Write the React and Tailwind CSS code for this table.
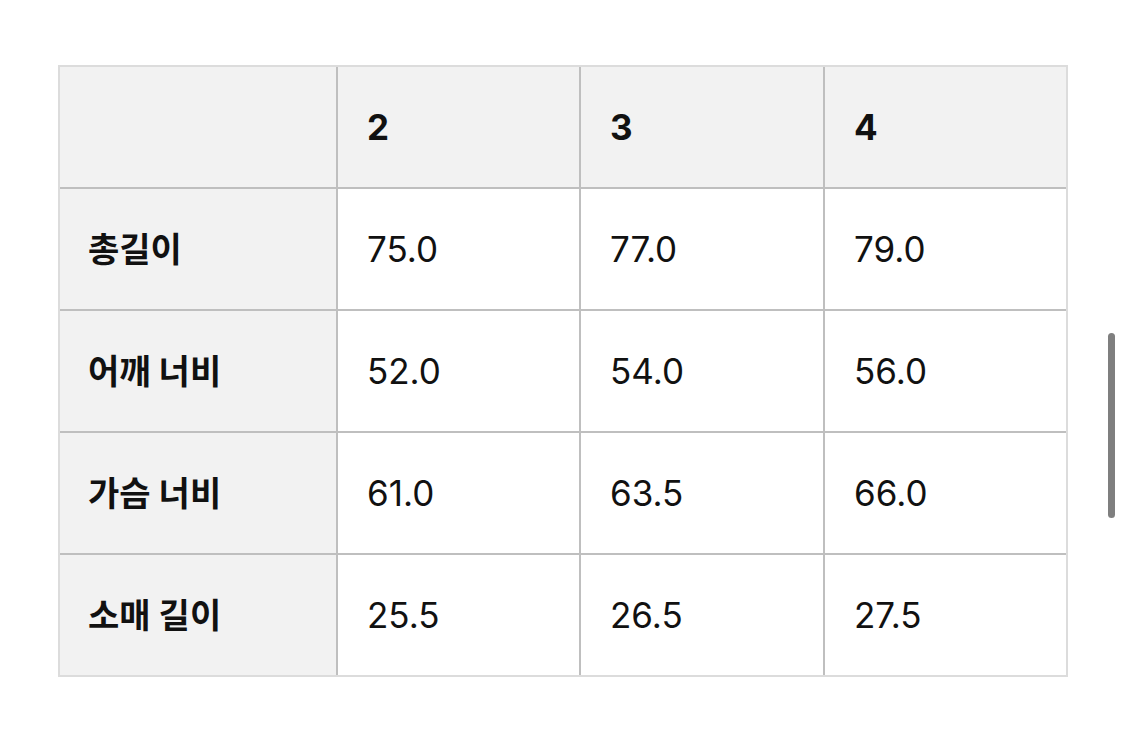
import React from 'react';

const sizes = ['2', '3', '4'];

const rows = [
  { label: '총길이', values: ['75.0', '77.0', '79.0'] },
  { label: '어깨 너비', values: ['52.0', '54.0', '56.0'] },
  { label: '가슴 너비', values: ['61.0', '63.5', '66.0'] },
  { label: '소매 길이', values: ['25.5', '26.5', '27.5'] },
];

export default function App() {
  return (
    <div
      className="relative min-h-[737px] bg-white pl-[58px] pt-[65px]"
      style={{ fontFamily: '"Inter", "Noto Sans CJK KR", sans-serif' }}
    >
      {/* Size table */}
      <div className="grid w-fit grid-cols-[276px_241px_242px_241px] grid-rows-[120px_120px_120px_120px_120px] gap-[2px] border-2 border-[#dcdcdc] bg-[#bfbfbf] text-[35px] text-[#111]">
        <div className="bg-[#f2f2f2]" />
        {sizes.map((s) => (
          <div key={s} className="flex items-center bg-[#f2f2f2] pl-[29px] font-bold">
            {s}
          </div>
        ))}

        {rows.map((row) => (
          <React.Fragment key={row.label}>
            <div className="flex items-center bg-[#f2f2f2] pl-[28px] text-[34px] font-bold">
              {row.label}
            </div>
            {row.values.map((v, i) => (
              <div key={i} className="flex items-center bg-white pl-[29px]">
                {v}
              </div>
            ))}
          </React.Fragment>
        ))}
      </div>

      {/* Overlay scrollbar */}
      <div className="absolute left-[1108px] top-[333px] h-[185px] w-[7px] rounded-full bg-[#7f7f7f]" />
    </div>
  );
}
